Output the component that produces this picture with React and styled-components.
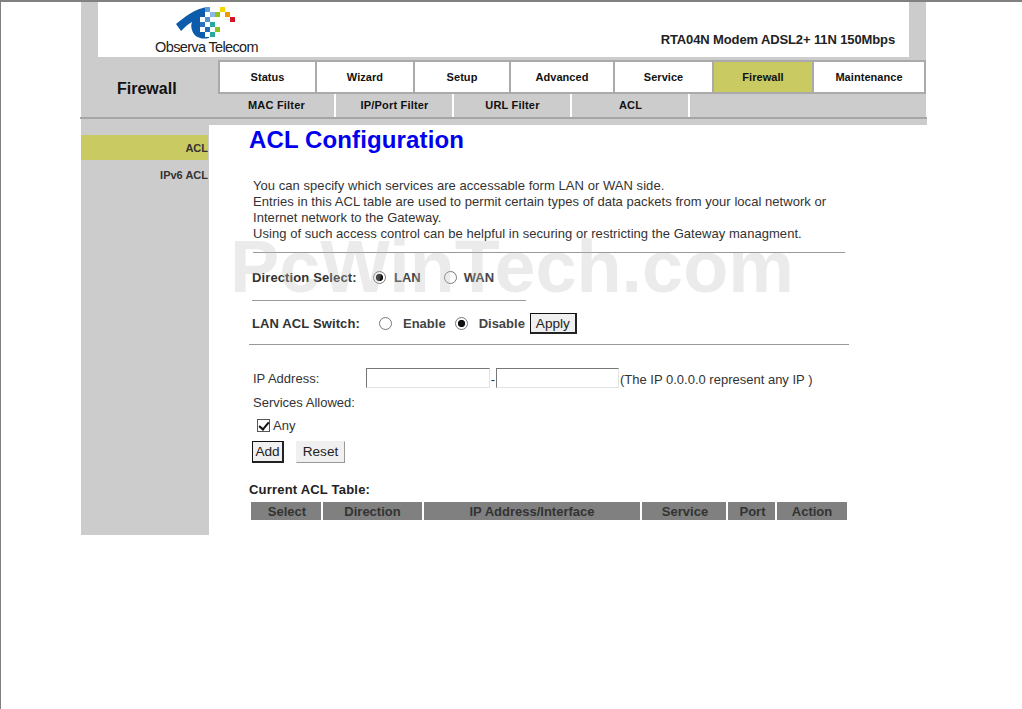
import React from "react";
import styled, { createGlobalStyle } from "styled-components";

const Global = createGlobalStyle`
  html, body { margin: 0; padding: 0; background: #fff; }
  body { font-family: "Liberation Sans", Arial, sans-serif; color: #333; }
  * { box-sizing: border-box; }
`;
const Page = styled.div`
  position: relative; height: 709px; overflow: hidden;
  border-top: 2px solid #808080; border-left: 1px solid #808080; padding-left: 80px;
`;
const Masthead = styled.div`width: 845px; background: #ccc;`;
const Banner = styled.header`
  margin: 0 17px; height: 55px; background: #fff; display: flex;
  justify-content: space-between; align-items: flex-end;
`;
const Brand = styled.div`
  margin-left: 57px; width: 103px; display: flex; flex-direction: column; align-items: center;
`;
const LogoSvg = styled.svg`display: block; margin: 2px 0 0 0; flex: none;`;
const BrandName = styled.div`
  font-size: 14.5px; line-height: 15px; margin-bottom: 2px; color: #222; letter-spacing: -0.65px; white-space: nowrap;
`;
const Model = styled.div`
  font-size: 13px; font-weight: bold; color: #222; line-height: 16px; margin: 0 14px 9px 0; white-space: nowrap;
  letter-spacing: -0.12px;
`;
const NavArea = styled.div`display: grid; grid-template-columns: 137px 708px; height: 60px;`;
const PageName = styled.div`
  font-size: 16px; font-weight: bold; color: #111; padding: 22px 0 0 36px; line-height: 20px;
`;
const Tabs = styled.nav`
  display: flex; margin-top: 3px; height: 34px; border: 2px solid #aaa;
`;
const Tab = styled.div`
  width: ${p => p.$w}px; flex: none; display: flex; align-items: center; justify-content: center;
  font-size: 11px; font-weight: bold; color: #111; letter-spacing: 0.05px;
  background: ${p => (p.$active ? "#caca62" : "#fff")};
  border-left: ${p => (p.$first ? "0" : "2px solid #aaa")};
`;
const SubNav = styled.div`display: flex; height: 23px;`;
const SubItem = styled.div`
  width: 118px; flex: none; display: flex; align-items: center; justify-content: center;
  font-size: 11px; font-weight: bold; color: #111; border-right: 2px solid #fff; padding: 0 0 1px 1px;
  letter-spacing: 0.2px;
`;
const Rule = styled.div`margin-left: -1px; width: 847px; height: 2px; background: #a6a6a6;`;
const Strip = styled.div`width: 846px; height: 6px; background: #ccc;`;
const Body = styled.div`display: flex; width: 846px;`;
const Sidebar = styled.aside`width: 128px; flex: none; background: #ccc; padding-top: 10px;`;
const SideItem = styled.div`
  height: 25px; width: 127px; display: flex; align-items: center; justify-content: flex-end;
  font-size: 11px; font-weight: bold; color: #333; margin-bottom: ${p => (p.$active ? "2px" : "0")};
  background: ${p => (p.$active ? "#caca62" : "transparent")};
  padding-top: 1px;
`;
const Main = styled.main`flex: 1; padding: 0 0 15px 40px; font-size: 13px;`;
const Title = styled.h1`
  margin: 0; height: 30px; font-size: 24px; line-height: 30px; color: #0000ee; font-weight: bold;
  white-space: nowrap; letter-spacing: 0.13px;
`;
const Intro = styled.p`
  margin: 23px 0 0 0; padding-left: 4px; width: 590px; font-size: 13px; line-height: 16px; color: #333; letter-spacing: 0.05px;
`;
const Line = styled.hr`
  border: 0; height: 1px; background: #999;
  margin: ${p => p.$mt}px 0 0 ${p => p.$ml}px; width: ${p => p.$w}px;
`;
const Row = styled.div`
  display: flex; align-items: center; height: ${p => p.$h}px; margin: ${p => p.$mt}px 0 0 ${p => p.$ml}px;
  white-space: nowrap; position: relative;
`;
const StrongLabel = styled.span`
  font-size: 13px; font-weight: bold; color: #333; width: ${p => p.$w}px; flex: none; letter-spacing: 0.12px;
`;
const Radio = styled.input.attrs({ type: "radio" })`
  appearance: none; width: 13px; height: 13px; margin: 0; flex: none; border-radius: 50%;
  border: 1px solid #777; background: #fff;
  &:checked { background: radial-gradient(circle, #111 0 3.4px, #fff 3.9px); }
`;
const ChoiceText = styled.span`font-size: 13px; font-weight: bold; color: #444; margin: 0 ${p => p.$mr}px 0 ${p => p.$ml}px;`;
const PlainButton = styled.button`
  font: 13.6px "Liberation Sans", Arial, sans-serif; color: #222; background: #f0f0f0;
  padding: 0 0 ${p => (p.$focus ? 0 : 2)}px 0;
  height: ${p => p.$h}px; width: ${p => p.$w}px; flex: none;
  margin-left: ${p => p.$ml || 0}px;
  border: ${p => (p.$focus ? "1px solid #111" : "1px solid #f0f0f0")};
  border-right: ${p => (p.$focus ? "2px solid #222" : "1px solid #999")};
  border-bottom: ${p => (p.$focus ? "2px solid #222" : "1px solid #999")};
`;
const FieldLabel = styled.span`font-size: 13px; color: #333; width: ${p => p.$w}px; flex: none;`;
const TextInput = styled.input.attrs({ type: "text" })`
  width: ${p => p.$w}px; height: 20px; flex: none; background: #fff; padding: 0; margin: 0;
  border: 1px solid #e3e3e3; border-top: 1px solid #777; border-left: 1px solid #777;
`;
const Dash = styled.span`width: 6px; flex: none; text-align: center; font-size: 13px; padding-top: 3px;`;
const Hint = styled.span`font-size: 13px; color: #333; margin-left: 1px; padding-top: 3px;`;
const Check = styled.input.attrs({ type: "checkbox" })`
  appearance: none; width: 13px; height: 13px; margin: 0 3px 0 0; flex: none; position: relative;
  border: 1px solid #555; background: #fff;
  &:checked::after {
    content: ""; position: absolute; left: 3px; top: 0; width: 4px; height: 8px;
    border: solid #111; border-width: 0 2px 2px 0; transform: rotate(40deg);
  }
`;
const TableCaption = styled.div`
  margin-top: 19px; height: 16px; font-size: 13px; font-weight: bold; color: #222; line-height: 16px; letter-spacing: 0.2px;
`;
const AclTable = styled.table`
  margin: 4px 0 0 0; border-collapse: separate; border-spacing: 2px 0; table-layout: fixed; width: 600px;
`;
const Th = styled.th`
  background: #808080; color: #333; height: 18px; padding: 0 0 0 ${p => p.$pl}px;
  font-size: 13px; font-weight: bold; text-align: center; width: ${p => p.$w}px;
`;
const Watermark = styled.div`
  position: absolute; left: 229px; top: 230px; font-size: 73.8px; line-height: 70px; font-weight: bold;
  color: rgba(190,190,190,.3); white-space: nowrap; pointer-events: none;
`;

const squares = [
  [29,6,"#ffffff"],[24,11,"#ffffff"],[34,11,"#ffffff"],[29,16,"#ffffff"],[24,21,"#ffffff"],[34,21,"#ffffff"],[29,26,"#ffffff"],
  [29,1,"#5c9bd5"],[34,6,"#8fb8e0"],[24,16,"#2a74bd"],[29,21,"#1f6fb7"],
  [39,6,"#8dc21f"],[44,1,"#f3d700"],[49,6,"#f39800"],[54,11,"#d5142b"],
  [34,16,"#27a9a0"],[39,21,"#8dc21f"],[34,26,"#27a9a0"],[29,11,"#4f93cf"],
];

function Logo() {
  return (
    <LogoSvg width="62" height="34" viewBox="0 0 62 34" aria-hidden="true">
      <path d="M0 18 C8 12 18 2 33 1 L33 32 C25 34 18 31 16 24 C15 21 15 19 16 16 C12 18 9 21 5 25 Z" fill="#0d5bab" />
      {squares.map(([x, y, c], i) => <rect key={i} x={x} y={y} width="5" height="5" fill={c} />)}
    </LogoSvg>
  );
}

const tabs = [["Status",95],["Wizard",98],["Setup",96],["Advanced",104],["Service",99],["Firewall",100],["Maintenance",112]];
const heads = [["Select",70,2],["Direction",99,0],["IP Address/Interface",216,0],["Service",84,2],["Port",47,2],["Action",70,0]];

export default function App() {
  return (
    <Page>
      <Global />
      <Masthead>
        <Banner>
          <Brand><Logo /><BrandName>Observa Telecom</BrandName></Brand>
          <Model>RTA04N Modem ADSL2+ 11N 150Mbps</Model>
        </Banner>
        <NavArea>
          <PageName>Firewall</PageName>
          <div>
            <Tabs>
              {tabs.map(([t, w], i) => <Tab key={t} $w={w} $first={i === 0} $active={t === "Firewall"}>{t}</Tab>)}
            </Tabs>
            <SubNav>
              {["MAC Filter","IP/Port Filter","URL Filter","ACL"].map(t => <SubItem key={t}>{t}</SubItem>)}
            </SubNav>
          </div>
        </NavArea>
      </Masthead>
      <Rule />
      <Strip />
      <Body>
        <Sidebar>
          <SideItem $active>ACL</SideItem>
          <SideItem>IPv6 ACL</SideItem>
        </Sidebar>
        <Main>
          <Title>ACL Configuration</Title>
          <Intro>
            You can specify which services are accessable form LAN or WAN side.<br />
            Entries in this ACL table are used to permit certain types of data packets from your local network or Internet network to the Gateway.<br />
            Using of such access control can be helpful in securing or restricting the Gateway managment.
          </Intro>
          <Line $mt={10} $ml={4} $w={592} />
          <Row $h={20} $mt={14} $ml={3}>
            <StrongLabel $w={121}>Direction Select:</StrongLabel>
            <Radio name="dir" defaultChecked />
            <ChoiceText $ml={8} $mr={23}>LAN</ChoiceText>
            <Radio name="dir" />
            <ChoiceText $ml={7} $mr={0}>WAN</ChoiceText>
          </Row>
          <Line $mt={13} $ml={3} $w={274} />
          <Row $h={21} $mt={12} $ml={3}>
            <StrongLabel $w={127}>LAN ACL Switch:</StrongLabel>
            <Radio name="sw" />
            <ChoiceText $ml={11} $mr={9}>Enable</ChoiceText>
            <Radio name="sw" defaultChecked />
            <ChoiceText $ml={11} $mr={5}>Disable</ChoiceText>
            <PlainButton $focus $w={47} $h={21}>Apply</PlainButton>
          </Row>
          <Line $mt={10} $ml={0} $w={600} />
          <Row $h={20} $mt={23} $ml={4}>
            <FieldLabel $w={113}>IP Address:</FieldLabel>
            <TextInput $w={124} />
            <Dash>-</Dash>
            <TextInput $w={123} />
            <Hint>(The IP 0.0.0.0 represent any IP )</Hint>
          </Row>
          <Row $h={20} $mt={4} $ml={4}>
            <FieldLabel $w={120}>Services Allowed:</FieldLabel>
          </Row>
          <Row $h={20} $mt={3} $ml={8}>
            <Check defaultChecked />
            <FieldLabel $w={40}>Any</FieldLabel>
          </Row>
          <Row $h={22} $mt={6} $ml={3}>
            <PlainButton $focus $w={32} $h={22}>Add</PlainButton>
            <PlainButton $w={49} $h={22} $ml={12}>Reset</PlainButton>
          </Row>
          <TableCaption>Current ACL Table:</TableCaption>
          <AclTable>
            <thead>
              <tr>{heads.map(([t, w, pl]) => <Th key={t} $w={w} $pl={pl}>{t}</Th>)}</tr>
            </thead>
          </AclTable>
        </Main>
      </Body>
      <Watermark>PcWinTech.com</Watermark>
    </Page>
  );
}
